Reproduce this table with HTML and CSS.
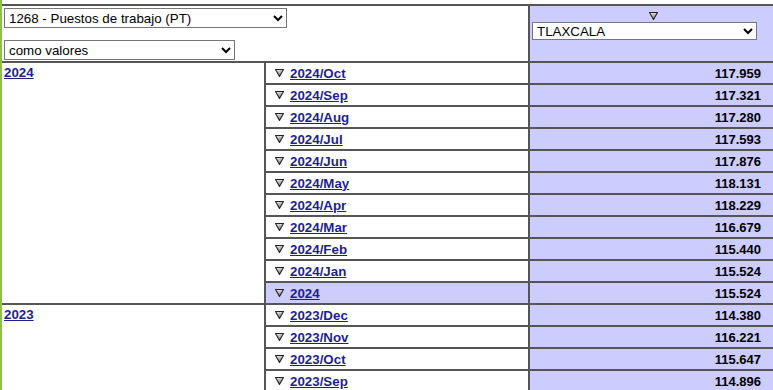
FILE: index.html
```html
<!DOCTYPE html>
<html lang="es">
<head>
<meta charset="utf-8">
<title>Puestos de trabajo</title>
<link rel="stylesheet" href="styles.css">
</head>
<body>
<div class="frame">
<table class="pivot">
  <colgroup><col class="c1"><col class="c2"><col class="c3"></colgroup>
  <tr class="head">
    <td class="h-left" colspan="2">
      <div class="controls">
        <select class="sel-indicator"><option>1268 - Puestos de trabajo (PT)</option></select>
        <select class="sel-mode"><option>como valores</option></select>
      </div>
    </td>
    <td class="h-right">
      <div class="hcol">
        <svg class="tri" width="9" height="8" viewBox="0 0 9 8"><defs><linearGradient id="tg" x1="0" y1="0" x2="0.3" y2="1"><stop offset="0" stop-color="#f2f2f2"/><stop offset="1" stop-color="#7e7e7e"/></linearGradient></defs><polygon points="0.5,0.5 8.5,0.5 4.5,7.5" fill="url(#tg)" stroke="#222" stroke-width="1.1" stroke-linejoin="round"/></svg>
        <select class="sel-state"><option>TLAXCALA</option></select>
      </div>
    </td>
  </tr>
  <tr>
    <td class="year" rowspan="11"><a href="#">2024</a></td>
    <td class="period"><div class="pl"><svg class="tri" width="9" height="8" viewBox="0 0 9 8"><polygon points="0.5,0.5 8.5,0.5 4.5,7.5" fill="url(#tg)" stroke="#222" stroke-width="1.1" stroke-linejoin="round"/></svg><a href="#">2024/Oct</a></div></td>
    <td class="val">117.959</td>
  </tr>
  <tr>
    <td class="period"><div class="pl"><svg class="tri" width="9" height="8" viewBox="0 0 9 8"><polygon points="0.5,0.5 8.5,0.5 4.5,7.5" fill="url(#tg)" stroke="#222" stroke-width="1.1" stroke-linejoin="round"/></svg><a href="#">2024/Sep</a></div></td>
    <td class="val">117.321</td>
  </tr>
  <tr>
    <td class="period"><div class="pl"><svg class="tri" width="9" height="8" viewBox="0 0 9 8"><polygon points="0.5,0.5 8.5,0.5 4.5,7.5" fill="url(#tg)" stroke="#222" stroke-width="1.1" stroke-linejoin="round"/></svg><a href="#">2024/Aug</a></div></td>
    <td class="val">117.280</td>
  </tr>
  <tr>
    <td class="period"><div class="pl"><svg class="tri" width="9" height="8" viewBox="0 0 9 8"><polygon points="0.5,0.5 8.5,0.5 4.5,7.5" fill="url(#tg)" stroke="#222" stroke-width="1.1" stroke-linejoin="round"/></svg><a href="#">2024/Jul</a></div></td>
    <td class="val">117.593</td>
  </tr>
  <tr>
    <td class="period"><div class="pl"><svg class="tri" width="9" height="8" viewBox="0 0 9 8"><polygon points="0.5,0.5 8.5,0.5 4.5,7.5" fill="url(#tg)" stroke="#222" stroke-width="1.1" stroke-linejoin="round"/></svg><a href="#">2024/Jun</a></div></td>
    <td class="val">117.876</td>
  </tr>
  <tr>
    <td class="period"><div class="pl"><svg class="tri" width="9" height="8" viewBox="0 0 9 8"><polygon points="0.5,0.5 8.5,0.5 4.5,7.5" fill="url(#tg)" stroke="#222" stroke-width="1.1" stroke-linejoin="round"/></svg><a href="#">2024/May</a></div></td>
    <td class="val">118.131</td>
  </tr>
  <tr>
    <td class="period"><div class="pl"><svg class="tri" width="9" height="8" viewBox="0 0 9 8"><polygon points="0.5,0.5 8.5,0.5 4.5,7.5" fill="url(#tg)" stroke="#222" stroke-width="1.1" stroke-linejoin="round"/></svg><a href="#">2024/Apr</a></div></td>
    <td class="val">118.229</td>
  </tr>
  <tr>
    <td class="period"><div class="pl"><svg class="tri" width="9" height="8" viewBox="0 0 9 8"><polygon points="0.5,0.5 8.5,0.5 4.5,7.5" fill="url(#tg)" stroke="#222" stroke-width="1.1" stroke-linejoin="round"/></svg><a href="#">2024/Mar</a></div></td>
    <td class="val">116.679</td>
  </tr>
  <tr>
    <td class="period"><div class="pl"><svg class="tri" width="9" height="8" viewBox="0 0 9 8"><polygon points="0.5,0.5 8.5,0.5 4.5,7.5" fill="url(#tg)" stroke="#222" stroke-width="1.1" stroke-linejoin="round"/></svg><a href="#">2024/Feb</a></div></td>
    <td class="val">115.440</td>
  </tr>
  <tr>
    <td class="period"><div class="pl"><svg class="tri" width="9" height="8" viewBox="0 0 9 8"><polygon points="0.5,0.5 8.5,0.5 4.5,7.5" fill="url(#tg)" stroke="#222" stroke-width="1.1" stroke-linejoin="round"/></svg><a href="#">2024/Jan</a></div></td>
    <td class="val">115.524</td>
  </tr>
  <tr>
    <td class="period total"><div class="pl"><svg class="tri" width="9" height="8" viewBox="0 0 9 8"><polygon points="0.5,0.5 8.5,0.5 4.5,7.5" fill="url(#tg)" stroke="#222" stroke-width="1.1" stroke-linejoin="round"/></svg><a href="#">2024</a></div></td>
    <td class="val">115.524</td>
  </tr>
  <tr>
    <td class="year" rowspan="4"><a href="#">2023</a></td>
    <td class="period"><div class="pl"><svg class="tri" width="9" height="8" viewBox="0 0 9 8"><polygon points="0.5,0.5 8.5,0.5 4.5,7.5" fill="url(#tg)" stroke="#222" stroke-width="1.1" stroke-linejoin="round"/></svg><a href="#">2023/Dec</a></div></td>
    <td class="val">114.380</td>
  </tr>
  <tr>
    <td class="period"><div class="pl"><svg class="tri" width="9" height="8" viewBox="0 0 9 8"><polygon points="0.5,0.5 8.5,0.5 4.5,7.5" fill="url(#tg)" stroke="#222" stroke-width="1.1" stroke-linejoin="round"/></svg><a href="#">2023/Nov</a></div></td>
    <td class="val">116.221</td>
  </tr>
  <tr>
    <td class="period"><div class="pl"><svg class="tri" width="9" height="8" viewBox="0 0 9 8"><polygon points="0.5,0.5 8.5,0.5 4.5,7.5" fill="url(#tg)" stroke="#222" stroke-width="1.1" stroke-linejoin="round"/></svg><a href="#">2023/Oct</a></div></td>
    <td class="val">115.647</td>
  </tr>
  <tr>
    <td class="period"><div class="pl"><svg class="tri" width="9" height="8" viewBox="0 0 9 8"><polygon points="0.5,0.5 8.5,0.5 4.5,7.5" fill="url(#tg)" stroke="#222" stroke-width="1.1" stroke-linejoin="round"/></svg><a href="#">2023/Sep</a></div></td>
    <td class="val">114.896</td>
  </tr>
</table>
</div>
</body>
</html>
```

FILE: styles.css
```css
html, body {
  margin: 0;
  padding: 0;
  overflow: hidden;
  background: #fff;
}

.frame {
  border-left: 2px solid #8dc43f;
  padding-top: 4px;
  min-height: 100vh;
  box-sizing: border-box;
}

.pivot {
  border-collapse: separate;
  border-spacing: 0;
  table-layout: fixed;
  width: 776px;
  border-top: 1px solid #555;
  font: 13px/15px "Liberation Sans", Arial, sans-serif;
  color: #000;
}

.c1 { width: 263px; }
.c2 { width: 264px; }
.c3 { width: 249px; }

.pivot td {
  border: 1px solid #555;
  padding: 0;
  box-sizing: border-box;
  height: 22px;
}

.pivot td.h-left,
.pivot td.year {
  border-left: 0;
}

.pivot a {
  color: #1f1f88;
  font-weight: bold;
  font-size: 13.33px;
  text-decoration: underline;
}

.pivot td.h-left {
  vertical-align: top;
  padding: 2px 2px 1px 2px;
}

.controls {
  display: flex;
  flex-direction: column;
  align-items: flex-start;
  gap: 12px;
}

select {
  font: 13.33px "Liberation Sans", Arial, sans-serif;
  color: #000;
  background: #fff;
  margin: 0;
}

.sel-indicator { width: 283px; height: 20px; }
.sel-mode { width: 231px; height: 20px; }
.sel-state { width: 225px; height: 18px; }

.pivot td.h-right {
  vertical-align: top;
  background: #ccccff;
  padding: 0 2px;
}

.hcol {
  display: flex;
  flex-direction: column;
  align-items: flex-start;
}

.hcol .tri {
  align-self: center;
  margin-top: 6px;
}

.hcol select {
  margin-top: 2px;
}

.tri {
  display: block;
  flex: none;
}

.pivot td.year {
  vertical-align: top;
  padding: 2px 2px 0 2px;
}

.pivot td.period {
  padding-left: 9px;
}

.pivot td.total {
  background: #ccccff;
}

.pl {
  display: flex;
  align-items: center;
  gap: 6px;
  height: 20px;
}

.pivot td.val {
  background: #ccccff;
  text-align: right;
  font-weight: bold;
  padding-right: 16px;
}
```
